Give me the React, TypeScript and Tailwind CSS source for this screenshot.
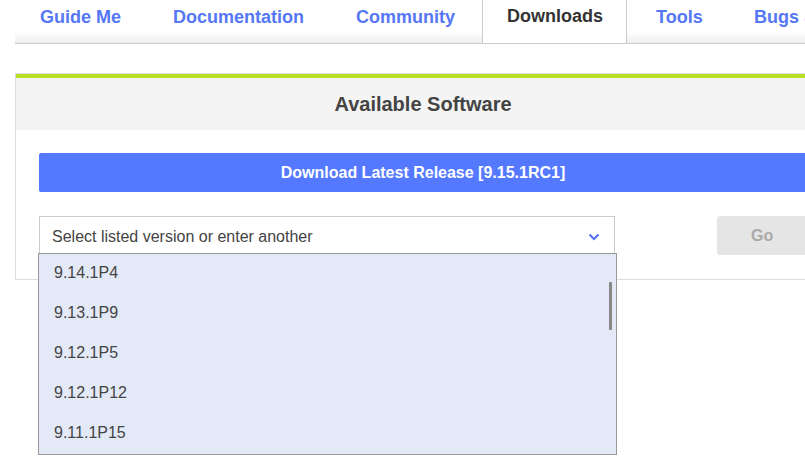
import { useState } from 'react'

type Tab = { label: string; width: string; pad: string }

const tabs: Tab[] = [
  { label: 'Guide Me', width: 'w-[131px]', pad: 'pl-[25px]' },
  { label: 'Documentation', width: 'w-[183px]', pad: 'pl-[27px]' },
  { label: 'Community', width: 'w-[153px]', pad: 'pl-[27px]' },
  { label: 'Downloads', width: 'w-[145px]', pad: 'pl-[24px]' },
  { label: 'Tools', width: 'w-[98px]', pad: 'pl-[29px]' },
  { label: 'Bugs & Support', width: 'w-[180px]', pad: 'pl-[29px]' },
]

const versions = ['9.14.1P4', '9.13.1P9', '9.12.1P5', '9.12.1P12', '9.11.1P15']

function ChevronDown() {
  return (
    <svg width="12" height="8" viewBox="0 0 12 8" className="shrink-0">
      <path d="M1.5 1.5 L6 6 L10.5 1.5" fill="none" stroke="#5577f5" strokeWidth="2.2" />
    </svg>
  )
}

export default function App() {
  const [open] = useState(true)

  return (
    <div
      className="w-[805px] h-[461px] overflow-hidden bg-white"
      style={{ fontFamily: '"Liberation Sans", Arial, sans-serif' }}
    >
      <nav className="ml-[15px] h-[44px] flex border-b border-[#cccccc] bg-[linear-gradient(to_bottom,#ffffff_72%,#eeeeee)] whitespace-nowrap">
        {tabs.map((tab) => {
          const active = tab.label === 'Downloads'
          return (
            <div
              key={tab.label}
              className={
                'shrink-0 h-[43px] text-[18px] leading-[21px] font-bold ' +
                tab.width +
                ' ' +
                tab.pad +
                (active
                  ? ' bg-white text-[#333333] border-x border-[#cccccc] pt-[6px]'
                  : ' text-[#5577f5] pt-[7px]')
              }
            >
              {tab.label}
            </div>
          )
        })}
      </nav>

      <div className="mt-[29px] ml-[15px] w-[816px] border border-[#dddddd]">
        <div className="h-[4px] bg-[#b9e127]" />
        <div className="h-[52px] bg-[#f4f4f4] flex items-center justify-center text-[20px] font-bold text-[#444444]">
          Available Software
        </div>
        <div className="px-[23px] pt-[23px] pb-[24px]">
          <button className="w-[768px] h-[39px] rounded-[2px] bg-[#5479ff] text-white text-[16px] font-bold flex items-center justify-center">
            Download Latest Release [9.15.1RC1]
          </button>
          <div className="mt-[24px] flex items-start">
            <div className="relative w-[577px]">
              <div className="h-[38px] border border-[#cccccc] bg-white flex items-center pt-[3px] pl-[12px] pr-[14px] text-[16px] text-[#444444]">
                <span className="flex-1">Select listed version or enter another</span>
                <ChevronDown />
              </div>
              {open && (
                <div className="absolute left-[-1px] top-[37px] w-[579px] h-[202px] border border-[#999999] bg-[#e3e9f7] overflow-hidden z-10">
                  <div className="mt-[-1px]">
                    {versions.map((v) => (
                      <div key={v} className="h-[40px] flex items-center pl-[15px] text-[16px] text-[#444444]">
                        {v}
                      </div>
                    ))}
                  </div>
                  <div className="absolute right-[4px] top-[28px] w-[3px] h-[48px] bg-[#888888] rounded-[1px]" />
                </div>
              )}
            </div>
            <button className="ml-[102px] w-[90px] h-[39px] rounded-[3px] bg-[#e5e5e5] text-[#aaaaaa] text-[16px] font-bold">
              Go
            </button>
          </div>
        </div>
      </div>
    </div>
  )
}
